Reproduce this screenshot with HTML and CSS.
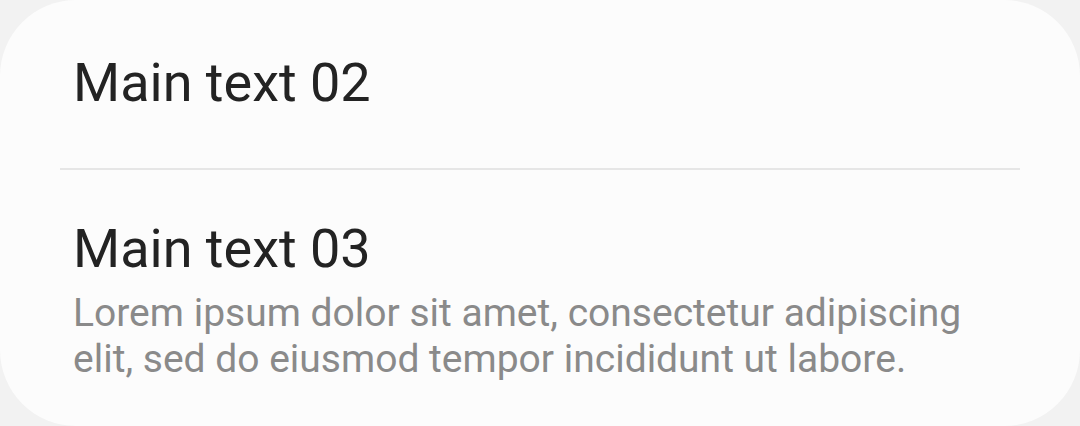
FILE: index.html
```html
<!DOCTYPE html>
<html lang="en">
<head>
<meta charset="utf-8">
<title>List</title>
<link rel="stylesheet" href="styles.css">
</head>
<body>
<div class="card">
  <div class="item item-first">
    <div class="title">Main text 02</div>
  </div>
  <div class="divider"></div>
  <div class="item item-last">
    <div class="title">Main text 03</div>
    <div class="sub">Lorem ipsum dolor sit amet, consectetur adipiscing elit, sed do eiusmod tempor incididunt ut labore.</div>
  </div>
</div>
</body>
</html>
```
FILE: styles.css
```css
html, body {
  margin: 0;
  padding: 0;
  background: #f2f2f2;
}
.card {
  width: 1080px;
  height: 426px;
  box-sizing: border-box;
  background: #fcfcfc;
  border-radius: 76px;
  padding: 0 60px;
  font-family: Roboto, "Liberation Sans", sans-serif;
}
.item {
  padding-left: 13px;
}
.item-first {
  padding-top: 51px;
  padding-bottom: 53px;
}
.title {
  font-size: 54px;
  line-height: 64px;
  color: #232323;
}
.divider {
  height: 2px;
  background: #e6e6e6;
}
.item-last {
  padding-top: 47px;
}
.sub {
  margin-top: 9px;
  font-size: 39px;
  line-height: 46px;
  color: #8a8a8a;
  padding-right: 40px;
}
```
